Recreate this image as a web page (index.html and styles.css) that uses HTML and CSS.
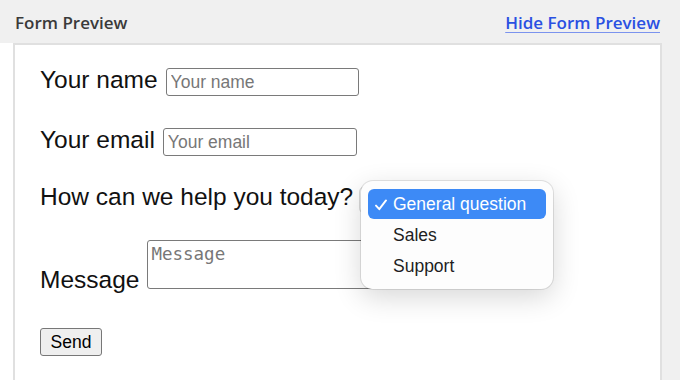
FILE: index.html
```html
<!DOCTYPE html>
<html>
<head>
<meta charset="utf-8">
<link rel="stylesheet" href="styles.css">
</head>
<body>
<header class="bar">
  <span class="bar-title">Form Preview</span>
  <a class="bar-link" href="#">Hide Form Preview</a>
</header>
<div class="stage">
  <div class="gutter"></div>
  <main class="panel">
    <form class="form">
      <div class="row">
        <label class="lbl">Your name</label>
        <input class="field f-name" type="text" placeholder="Your name">
      </div>
      <div class="row r2">
        <label class="lbl">Your email</label>
        <input class="field f-email" type="text" placeholder="Your email">
      </div>
      <div class="row r3">
        <label class="lbl">How can we help you today?</label>
        <div class="select-closed"></div>
      </div>
      <div class="row r4">
        <label class="lbl lbl-msg">Message</label>
        <textarea class="area" placeholder="Message"></textarea>
      </div>
      <div class="row r5">
        <button class="btn" type="button">Send</button>
      </div>
    </form>
  </main>
  <div class="rest"></div>
</div>
<div class="menu">
  <div class="item active">
    <svg class="check" width="12" height="12" viewBox="0 0 12 12"><path d="M1 6.6 L4.3 10.2 L11 1.4" fill="none" stroke="#fff" stroke-width="1.9" stroke-linecap="round" stroke-linejoin="round"/></svg>
    <span>General question</span>
  </div>
  <div class="item"><span>Sales</span></div>
  <div class="item"><span>Support</span></div>
</div>
</body>
</html>
```

FILE: styles.css
```css
html, body {
  margin: 0;
  padding: 0;
  width: 680px;
  height: 380px;
  overflow: hidden;
  background: #f0f0f0;
}
body {
  display: flex;
  flex-direction: column;
}
.bar {
  height: 43px;
  flex: none;
  display: flex;
  align-items: center;
  justify-content: space-between;
  padding: 2px 20px 0 15px;
  box-sizing: border-box;
  font-family: "Open Sans", "Liberation Sans", sans-serif;
  font-weight: 600;
  font-size: 17px;
}
.bar-title {
  color: #3a3a3a;
}
.bar-link {
  color: #2a50e2;
  text-decoration: underline;
  text-decoration-color: #7b93ee;
  text-underline-offset: 3px;
}
.stage {
  flex: 1;
  display: flex;
}
.gutter {
  width: 13px;
  background: #ffffff;
}
.panel {
  width: 649px;
  box-sizing: border-box;
  background: #ffffff;
  border: 2px solid #e0e0e0;
  border-bottom: none;
}
.rest {
  flex: 1;
}
.form {
  display: flex;
  flex-direction: column;
  padding: 23px 0 0 25px;
  font-family: "Liberation Sans", Arial, sans-serif;
}
.row {
  display: flex;
  align-items: baseline;
  gap: 8px;
}
.r2 { margin-top: 32px; }
.r3 { margin-top: 30px; align-items: flex-start; }
.r4 { margin-top: 26px; align-items: flex-end; }
.r5 { margin-top: 39px; }
.lbl {
  font-size: 24.5px;
  line-height: 20px;
  color: #111;
}
.r3 .lbl {
  margin-top: 1px;
}
.lbl-msg {
  margin-bottom: -1px;
}
.field {
  box-sizing: border-box;
  width: 193px;
  height: 28px;
  margin: 0;
  padding: 0 4px;
  border: 1px solid #7a7a7a;
  border-radius: 3px;
  font-family: "Liberation Sans", Arial, sans-serif;
  font-size: 17.5px;
  color: #222;
  background: #fff;
}
.f-email { width: 194px; }
.field::placeholder {
  color: #777;
}
.select-closed {
  width: 190px;
  height: 28px;
  box-sizing: border-box;
  border: 1px solid #d8d8d8;
  border-radius: 6px;
  background: #fff;
  margin-left: -2px;
}
.area {
  box-sizing: border-box;
  width: 226px;
  height: 49px;
  margin: 0;
  padding: 3px 3px;
  border: 1px solid #7a7a7a;
  border-radius: 3px;
  resize: none;
  font-family: "DejaVu Sans Mono", monospace;
  font-size: 17.5px;
  line-height: 20px;
  background: #fff;
}
.area::placeholder {
  color: #777;
}
.btn {
  box-sizing: border-box;
  width: 62px;
  height: 28px;
  margin: 0;
  padding: 0;
  border: 1px solid #777;
  border-radius: 3px;
  background: #efefef;
  font-family: "Liberation Sans", Arial, sans-serif;
  font-size: 17.5px;
  color: #000;
}
.menu {
  position: absolute;
  left: 361px;
  top: 181px;
  width: 192px;
  box-sizing: border-box;
  padding: 7px 0;
  background: #fdfdfd;
  border-radius: 12px;
  box-shadow: 0 0 0 1px rgba(0,0,0,0.10), 0 8px 28px rgba(0,0,0,0.16);
  font-family: "Liberation Sans", Arial, sans-serif;
  font-size: 17.5px;
  color: #1e1e1e;
}
.item {
  height: 30px;
  margin: 1px 7px;
  padding-left: 25px;
  display: flex;
  align-items: center;
  position: relative;
  border-radius: 6px;
}
.item.active {
  background: #3d8af6;
  color: #fff;
}
.check {
  position: absolute;
  left: 7px;
  top: 10px;
}
```
